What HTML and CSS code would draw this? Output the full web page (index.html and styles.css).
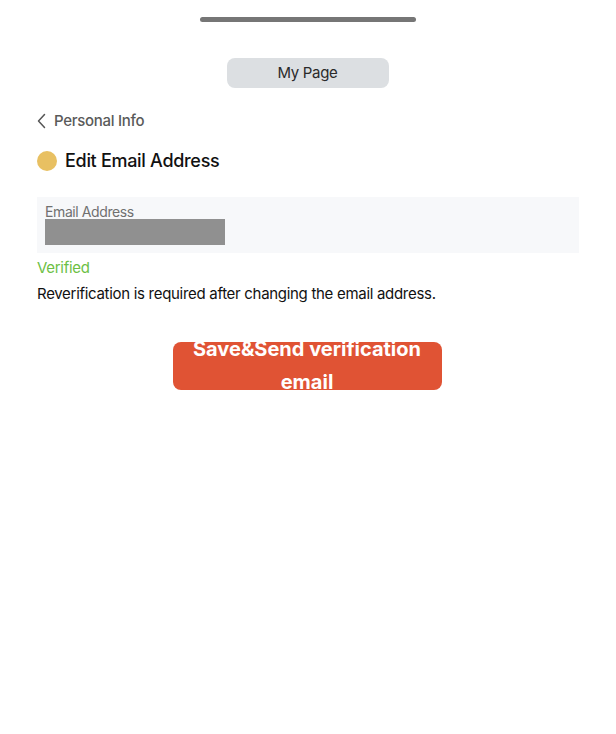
FILE: index.html
```html
<!DOCTYPE html>
<html lang="en">
<head>
    <meta charset="UTF-8" />
    <meta name="viewport" content="width=device-width, initial-scale=1" />
    <title>Edit Email Address</title>
    <link rel="stylesheet" href="styles.css">
</head>
<body>
    <div class="sheet">
        <div class="grabber"></div>

        <div class="tab-row">
            <div class="tab-pill">My Page</div>
        </div>

        <a class="back-link" href="#">
            <svg class="chevron" width="9" height="16" viewBox="0 0 9 16">
                <path d="M7.5 1.5 L1.5 8 L7.5 14.5" fill="none" stroke="#555" stroke-width="1.5" stroke-linecap="round" stroke-linejoin="round"/>
            </svg>
            <span>Personal Info</span>
        </a>

        <h1 class="title">
            <span class="dot"></span>
            Edit Email Address
        </h1>

        <div class="field">
            <label class="field-label">Email Address</label>
            <div class="field-value"></div>
        </div>

        <div class="status">Verified</div>
        <p class="note">Reverification is required after changing the email address.</p>

        <div class="actions">
            <button class="primary"><span>Save&amp;Send verification email</span></button>
        </div>
    </div>
</body>
</html>
```

FILE: styles.css
```css
body {
    margin: 0;
    background: #ffffff;
    font-family: Inter, 'Noto Sans', 'Liberation Sans', sans-serif;
    color: #111;
    letter-spacing: -0.3px;
}

.sheet {
    padding: 17px 37px 0;
}

.grabber {
    width: 216px;
    height: 5px;
    margin: 0 auto;
    border-radius: 3px;
    background: #767676;
}

.tab-row {
    display: flex;
    justify-content: center;
    margin-top: 36px;
    margin-right: 1px;
}
.tab-pill {
    width: 162px;
    height: 30px;
    line-height: 30px;
    text-align: center;
    border-radius: 8px;
    background: #dcdfe2;
    color: #2a2a2a;
    font-size: 15px;
}

.back-link {
    display: flex;
    align-items: center;
    gap: 8px;
    margin-top: 23px;
    color: #5a5a5a;
    font-size: 15px;
    font-weight: 500;
    text-decoration: none;
}
.chevron { display: block; }

.title {
    display: flex;
    align-items: center;
    gap: 8px;
    margin: 20px 0 0;
    font-size: 18px;
    font-weight: 500;
    color: #111;
}
.dot {
    width: 20px;
    height: 20px;
    border-radius: 50%;
    background: #e8c062;
}

.field {
    margin-top: 26px;
    padding: 7px 8px 8px;
    background: #f7f8fa;
}
.field-label {
    display: block;
    font-size: 14px;
    line-height: 15px;
    color: #707070;
    letter-spacing: -0.4px;
}
.field-value {
    width: 180px;
    height: 26px;
    background: #909090;
}

.status {
    margin-top: 5px;
    font-size: 15px;
    color: #6cbf45;
}
.note {
    margin: 7px 0 0;
    font-size: 15px;
    color: #111;
}

.actions {
    display: flex;
    justify-content: center;
    margin-top: 39px;
    margin-right: 2px;
}
.primary {
    display: flex;
    align-items: center;
    justify-content: center;
    width: 269px;
    height: 48px;
    padding: 0 12px;
    border: none;
    border-radius: 8px;
    background: #e05334;
    color: #fff;
    font-family: inherit;
    font-size: 20px;
    font-weight: 700;
    line-height: 33px;
    letter-spacing: 0;
    text-align: center;
}
```
